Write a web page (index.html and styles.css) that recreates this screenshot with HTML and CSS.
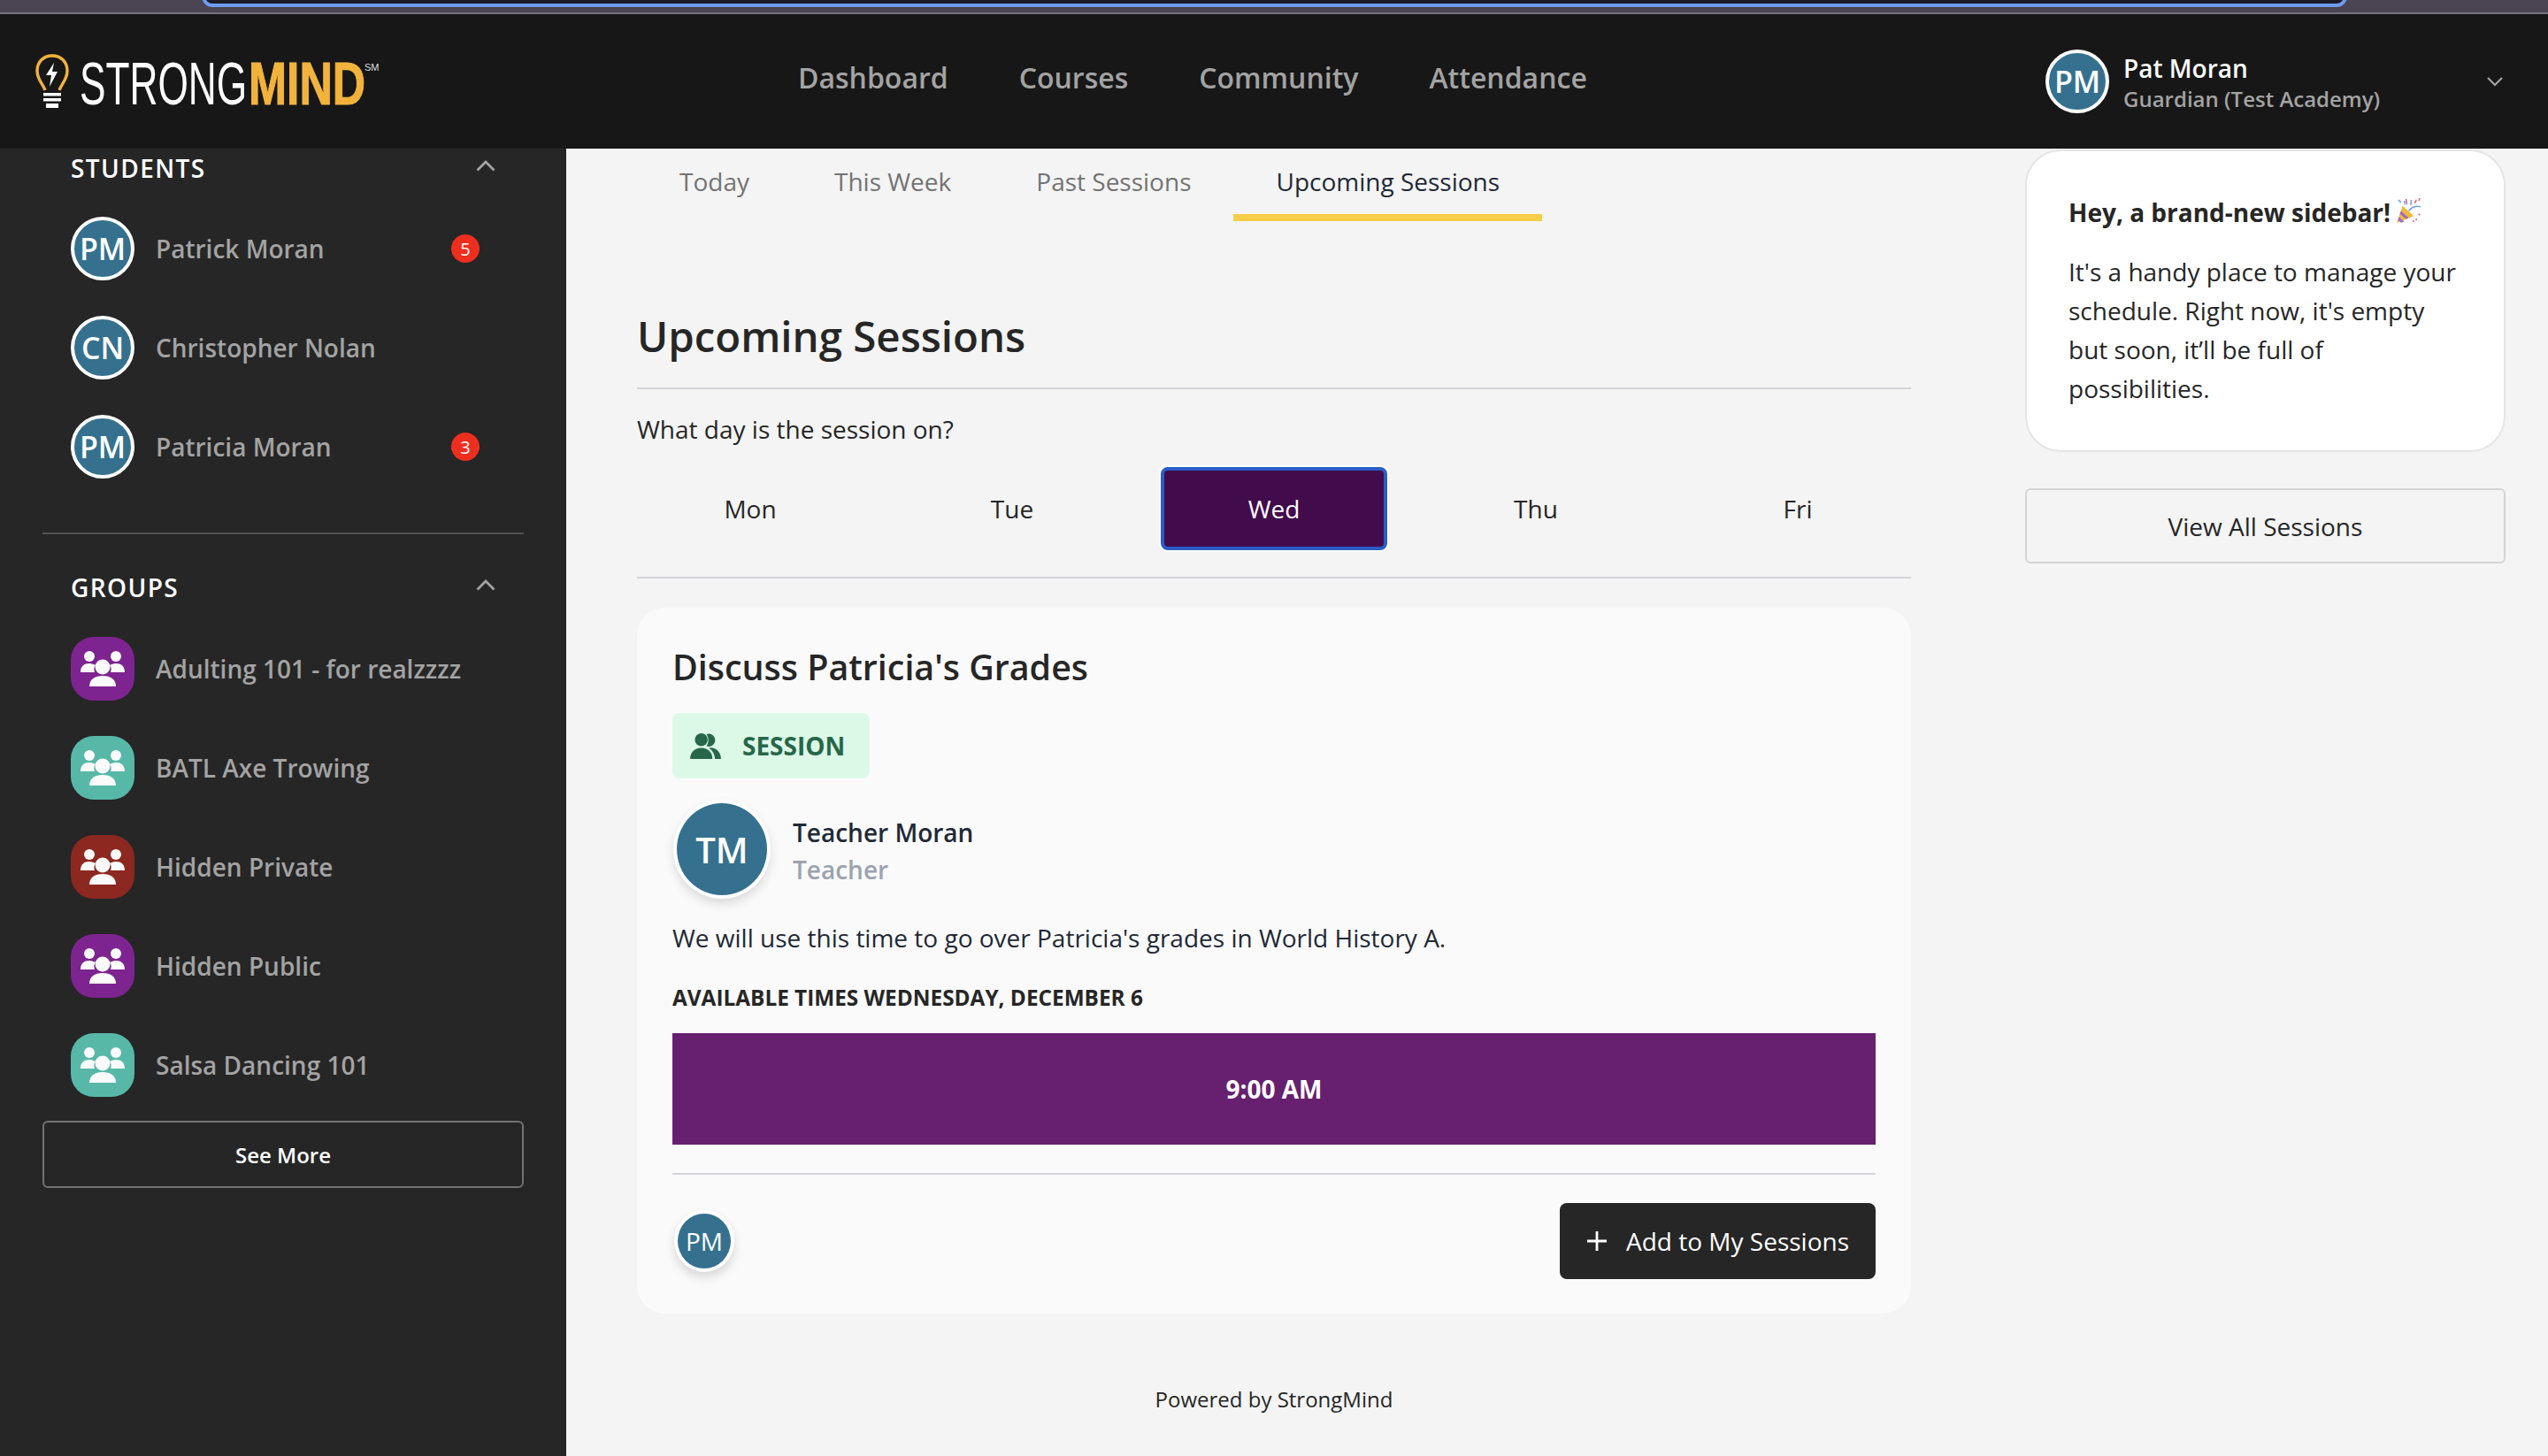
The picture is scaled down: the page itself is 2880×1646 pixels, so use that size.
FILE: index.html
```html
<!DOCTYPE html>
<html lang="en">
<head>
<meta charset="utf-8">
<title>Upcoming Sessions</title>
<link rel="stylesheet" href="styles.css">
</head>
<body>
<svg class="defs" width="0" height="0" aria-hidden="true">
  <symbol id="people" viewBox="0 0 50 40">
    <circle cx="10" cy="6" r="6"/><circle cx="40" cy="6" r="6"/>
    <path d="M0 24c0-7 4-10 10-10 3 0 5 1 7 2-2 2-2 5-1 8z"/>
    <path d="M50 24c0-7-4-10-10-10-3 0-5 1-7 2 2 2 2 5 1 8z"/>
    <ellipse cx="25" cy="18" rx="8.500" ry="8.500"/>
    <path d="M10 40c0-8 6-12 15-12s15 4 15 12z"/>
  </symbol>
  <symbol id="up" viewBox="0 0 22 13"><path d="M1.500 11.500 11 2l9.500 9.500" fill="none" stroke="currentColor" stroke-width="2.800"/></symbol>
</svg>

<div class="strip"><div class="strip-field"></div></div>

<header class="topbar">
  <div class="logo">
    <svg class="bulb" viewBox="0 0 38 62">
      <path d="M11 41C8 33 2 29 2 19 2 9 9 2 19 2s17 7 17 17c0 10-6 14-9 22" fill="none" stroke="#f2b33d" stroke-width="3.400"/>
      <path d="M21 10 12 24h6l-2 13 9-17h-6z" fill="#fff"/>
      <path d="M9 44h20v3.500H9zM9 50h20v3.500H9zM12 56h14v5H12z" fill="#fff"/>
    </svg>
    <span class="logo-word"><span class="logo-a">STRONG</span></span><span class="logo-word logo-word-b"><span class="logo-b">MIND</span></span><span class="logo-sm">SM</span>
  </div>
  <nav class="nav">
    <a>Dashboard</a><a>Courses</a><a>Community</a><a>Attendance</a>
  </nav>
  <div class="user">
    <span class="avatar avatar-big">PM</span>
    <div class="user-text">
      <div class="user-name">Pat Moran</div>
      <div class="user-role">Guardian (Test Academy)</div>
    </div>
    <svg class="user-chev" viewBox="0 0 18 11"><path d="M1 1l8 8 8-8" fill="none" stroke="currentColor" stroke-width="2.200"/></svg>
  </div>
</header>

<div class="layout">
  <aside class="sidebar">
    <section class="side-sec">
      <div class="side-head"><span>STUDENTS</span><svg class="chev"><use href="#up"/></svg></div>
      <div class="side-row"><span class="avatar avatar-big">PM</span><span class="side-name">Patrick Moran</span><span class="badge">5</span></div>
      <div class="side-row"><span class="avatar avatar-big">CN</span><span class="side-name">Christopher Nolan</span></div>
      <div class="side-row"><span class="avatar avatar-big">PM</span><span class="side-name">Patricia Moran</span><span class="badge">3</span></div>
    </section>
    <hr class="side-rule">
    <section class="side-sec">
      <div class="side-head"><span>GROUPS</span><svg class="chev"><use href="#up"/></svg></div>
      <div class="side-row"><span class="group purple"><svg><use href="#people"/></svg></span><span class="side-name">Adulting 101 - for realzzzz</span></div>
      <div class="side-row"><span class="group teal"><svg><use href="#people"/></svg></span><span class="side-name">BATL Axe Trowing</span></div>
      <div class="side-row"><span class="group red"><svg><use href="#people"/></svg></span><span class="side-name">Hidden Private</span></div>
      <div class="side-row"><span class="group purple"><svg><use href="#people"/></svg></span><span class="side-name">Hidden Public</span></div>
      <div class="side-row"><span class="group teal"><svg><use href="#people"/></svg></span><span class="side-name">Salsa Dancing 101</span></div>
    </section>
    <button class="see-more">See More</button>
  </aside>

  <main class="main">
    <div class="tabs">
      <a class="tab">Today</a><a class="tab">This Week</a><a class="tab">Past Sessions</a><a class="tab tab-on">Upcoming Sessions</a>
    </div>
    <h1 class="title">Upcoming Sessions</h1>
    <p class="question">What day is the session on?</p>
    <div class="days">
      <button class="day">Mon</button><button class="day">Tue</button><button class="day day-on">Wed</button><button class="day">Thu</button><button class="day">Fri</button>
    </div>
    <article class="card">
      <h2 class="card-title">Discuss Patricia's Grades</h2>
      <div class="pill">
        <svg viewBox="0 0 36 30"><circle cx="13" cy="7.500" r="7.500"/><path d="M19 1a7.500 7.500 0 1 1 0 14c3-4 3-10 0-14z"/><path d="M0 30c0-8 5-13 13-13s13 5 13 13z"/><path d="M22 17c8-1 14 5 14 13h-7c0-5-3-10-7-13z"/></svg>
        <span>SESSION</span>
      </div>
      <div class="teacher">
        <span class="avatar avatar-teacher">TM</span>
        <div class="teacher-text">
          <div class="teacher-name">Teacher Moran</div>
          <div class="teacher-role">Teacher</div>
        </div>
      </div>
      <p class="desc">We will use this time to go over Patricia's grades in World History A.</p>
      <div class="avail">AVAILABLE TIMES WEDNESDAY, DECEMBER 6</div>
      <button class="slot">9:00 AM</button>
      <div class="card-foot">
        <span class="avatar avatar-small">PM</span>
        <button class="add"><svg viewBox="0 0 22 22"><path d="M11 0v22M0 11h22" stroke="currentColor" stroke-width="2.800" fill="none"/></svg>Add to My Sessions</button>
      </div>
    </article>
    <footer class="powered">Powered by StrongMind</footer>
  </main>

  <aside class="rail">
    <div class="rail-card">
      <div class="rail-head"><span>Hey, a brand-new sidebar!</span>
        <svg class="party" viewBox="0 0 30 30">
          <path d="M1 29 8 9l13 12z" fill="#f0b93a"/>
          <path d="M3.500 22 10 27.500l-4 1.300-3.500-3.500zM6 15l9 8-3 1.500-7.500-6.500z" fill="#a269c9"/>
          <path d="M15 15c4-5 9-6 14-5M10 7c1 1 0-3 0-4M18 2c-1 3 1 4-1 6M3 2l3 3" fill="none" stroke="#6f9fe8" stroke-width="1.600"/>
          <path d="M24 2l-2 4M28 0l-1 3M12 1l1 6M27 18l1 2M24 24l0 2M20 26l1 2" fill="none" stroke="#e0688a" stroke-width="1.700"/>
        </svg>
      </div>
      <p class="rail-text">It's a handy place to manage your schedule. Right now, it's empty but soon, it’ll be full of possibilities.</p>
    </div>
    <button class="view-all">View All Sessions</button>
  </aside>
</div>
</body>
</html>
```

FILE: styles.css
```css
* { box-sizing: border-box; }
html, body { margin: 0; }
body {
  width: 2880px; height: 1646px; overflow: hidden;
  font-family: "Open Sans", "Noto Sans", sans-serif;
  font-size: 28px; color: #262626; background: #f4f4f4;
  display: flex; flex-direction: column;
}
button { font: inherit; color: inherit; background: none; border: 0; padding: 0; }
h1, h2, p { margin: 0; }
.defs { position: absolute; }

.strip { height: 16px; flex: none; background: #4b4453; border-bottom: 2px solid #77737c; padding-left: 228px; overflow: hidden; }
.strip-field { width: 2425px; height: 24px; margin-top: -16px; background: #1b1c26; border: 4px solid #6d9bf0; border-radius: 20px; }

.topbar { height: 152px; flex: none; background: #171717; display: flex; align-items: center; color: #fff; }
.logo { width: 902px; flex: none; padding-left: 40px; display: flex; align-items: flex-start; height: 62px; }
.bulb { width: 38px; height: 62px; flex: none; margin-right: 12px; }
.logo-word { width: 191px; flex: none; display: block; line-height: 62px; font-size: 68px; white-space: nowrap; }
.logo-word-b { width: 128px; }
.logo-a, .logo-b { display: inline-block; transform-origin: left center; font-family: "Liberation Sans", sans-serif; }
.logo-a { transform: scaleX(.65); color: #fff; }
.logo-b { transform: scaleX(.76); color: #f2b33d; font-weight: 700; -webkit-text-stroke: 1.2px #f2b33d; }
.logo-sm { font-size: 11px; font-family: "Liberation Sans", sans-serif; margin: 10px 0 0 3px; line-height: 1; color: #ddd; }
.nav { flex: 1; display: flex; gap: 80px; font-size: 32px; font-weight: 600; color: #a3a3a3; margin-top: -9px; }
.user { width: 517px; margin-right: 51px; flex: none; display: flex; align-items: center; }
.avatar { display: flex; align-items: center; justify-content: center; flex: none; border-radius: 50%; background: #35718f; color: #fff; border: 4px solid #fff; }
.avatar-big { width: 72px; height: 72px; font-size: 34px; font-weight: 600; }
.user-text { margin: 3px 0 0 16px; flex: 1; }
.user-name { font-weight: 600; line-height: 36px; color: #fafafa; }
.user-role { font-size: 24px; font-weight: 600; line-height: 34px; color: #a3a3a3; }
.user-chev { width: 18px; height: 11px; color: #a3a3a3; }

.layout { flex: 1; min-height: 0; display: flex; }
.sidebar { width: 640px; flex: none; background: #262626; padding: 0 48px; color: #fff; }
.side-head { height: 44px; margin-bottom: 13px; padding: 0 32px; display: flex; align-items: center; justify-content: space-between; font-weight: 600; letter-spacing: 1.4px; }
.chev { width: 22px; height: 13px; color: #a3a3a3; margin-top: -6px; }
.side-row { height: 112px; display: flex; align-items: center; padding: 0 32px; }
.side-name { font-weight: 600; color: #a3a3a3; margin-left: 24px; flex: 1; white-space: nowrap; }
.badge { width: 32px; height: 32px; margin-right: 18px; border-radius: 50%; background: #ee2f1f; color: #fff; font-size: 20px; display: flex; align-items: center; justify-content: center; }
.side-rule { margin: 41px 0 38px; border: 0; border-top: 2px solid #525252; }
.side-rule + .side-sec .side-head { margin-bottom: 14px; }
.group { width: 72px; height: 72px; flex: none; border-radius: 26px; display: flex; align-items: center; justify-content: center; }
.group svg { width: 50px; height: 40px; fill: #fafafa; }
.purple { background: #7e2490; }
.teal { background: #57b8a8; }
.red { background: #8d2820; }
.see-more { display: block; width: 100%; height: 76px; margin-top: 7px; border: 2px solid #737373; border-radius: 6px; color: #fff; font-size: 24px; font-weight: 600; }

.main { width: 1440px; margin-left: 80px; flex: none; display: flex; flex-direction: column; }
.tabs { display: flex; height: 82px; flex: none; }
.tab { padding: 0 48px; line-height: 74px; border-bottom: 8px solid transparent; color: #737373; }
.tab-on { color: #1f2937; border-bottom-color: #f5cd47; }
.title { margin-top: 100px; padding-bottom: 28px; border-bottom: 2px solid #d4d4d8; font-size: 47.400px; font-weight: 600; line-height: 60px; }
.question { margin-top: 25px; line-height: 40px; }
.days { display: flex; gap: 40px; margin-top: 23px; padding-bottom: 30px; border-bottom: 2px solid #d4d4d8; }
.day { flex: none; width: 256px; height: 94px; border-radius: 8px; }
.day-on { background: #420b4c; color: #fff; border: 4px solid #2a5dc7; box-shadow: 0 0 0 2px #fff; }
.card { margin-top: 33px; padding: 40px 40px 39px; background: #fafafa; border-radius: 32px; }
.card-title { font-size: 39.400px; font-weight: 600; line-height: 54px; }
.pill { width: 223px; height: 74px; margin-top: 25px; padding-left: 20px; display: flex; align-items: center; gap: 24px; background: #dcf9e8; border-radius: 8px; color: #276749; font-weight: 700; }
.pill svg { width: 35px; height: 29px; fill: currentColor; flex: none; }
.teacher { display: flex; align-items: center; margin-top: 24px; }
.avatar-teacher { width: 110px; height: 112px; margin-left: 1px; font-size: 40px; font-weight: 600; box-shadow: 0 6px 12px rgba(0,0,0,.12); }
.teacher-text { margin: 4px 0 0 25px; line-height: 42px; font-weight: 600; }
.teacher-name { color: #1f2937; }
.teacher-role { color: #9ca3af; }
.desc { margin-top: 24px; line-height: 40px; color: #1f2937; }
.avail { margin-top: 32px; font-size: 24.350px; font-weight: 700; line-height: 32px; }
.slot { display: block; width: 100%; height: 126px; margin-top: 24px; background: #66206f; color: #fff; font-weight: 700; }
.card-foot { margin-top: 32px; padding-top: 32px; border-top: 2px solid #d4d4d8; display: flex; align-items: center; justify-content: space-between; }
.avatar-small { width: 68px; height: 70px; margin-left: 2px; font-size: 28px; box-shadow: 0 6px 12px rgba(0,0,0,.14); }
.add { width: 357px; height: 86px; padding-left: 31px; display: flex; align-items: center; gap: 22px; background: #262626; border-radius: 8px; color: #fff; white-space: nowrap; }
.add svg { width: 22px; height: 22px; flex: none; }
.powered { margin-top: 79px; text-align: center; font-size: 24px; line-height: 36px; }

.rail { width: 543px; margin: 1px 0 0 129px; flex: none; }
.rail-card { height: 342px; padding: 48px 48px 0 47px; background: #fff; border: 2px solid #e5e5e5; border-radius: 40px; }
.rail-head { display: flex; align-items: center; gap: 6px; font-weight: 700; line-height: 42px; white-space: nowrap; }
.party { width: 29px; height: 29px; flex: none; margin-top: -4px; }
.rail-text { margin-top: 24px; line-height: 44px; }
.view-all { display: block; width: 100%; height: 85px; margin-top: 41px; border: 2px solid #d4d4d4; border-radius: 6px; text-align: center; }
```
